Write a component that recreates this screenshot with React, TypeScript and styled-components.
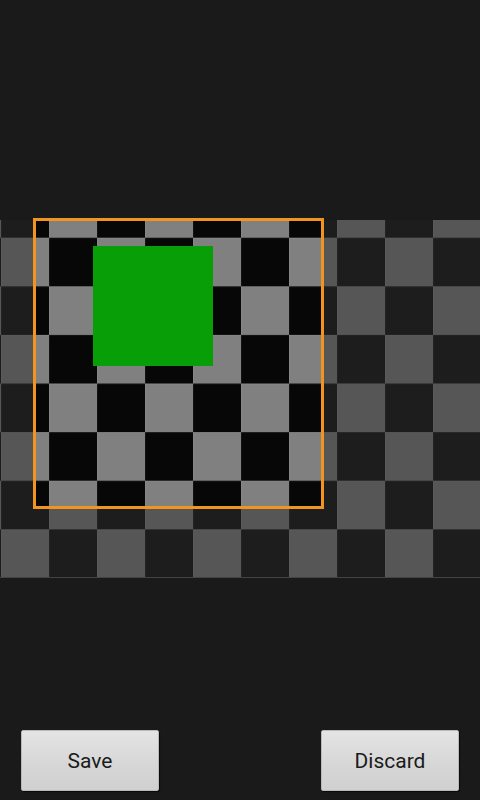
import React from 'react';
import styled, { createGlobalStyle } from 'styled-components';

const GlobalStyle = createGlobalStyle`
  html, body {
    margin: 0;
    padding: 0;
    background: #1a1a1a;
  }
  #root {
    height: 100vh;
  }
`;

const Screen = styled.div`
  display: flex;
  flex-direction: column;
  height: 100%;
  background: #1a1a1a;
  font-family: Roboto, "Noto Sans", sans-serif;
`;

const Stage = styled.div`
  flex: 1;
  padding-top: 220px;
`;

const Editor = styled.div`
  position: relative;
  width: 480px;
  height: 358px;
`;

const Picture = styled.div`
  position: relative;
  width: 100%;
  height: 100%;
  overflow: hidden;

  svg {
    display: block;
  }
`;

// undimmed region: everything around it gets the dim shadow
const CropWindow = styled.div<{ $x: number; $y: number; $size: number }>`
  position: absolute;
  left: ${(p) => p.$x}px;
  top: ${(p) => p.$y}px;
  width: ${(p) => p.$size}px;
  height: ${(p) => p.$size}px;
  box-shadow: 0 0 0 1000px rgba(49, 49, 49, 0.53);
`;

const CropFrame = styled.div<{ $x: number; $y: number; $size: number }>`
  position: absolute;
  left: ${(p) => p.$x}px;
  top: ${(p) => p.$y}px;
  width: ${(p) => p.$size}px;
  height: ${(p) => p.$size}px;
  box-sizing: border-box;
  border: 3px solid #f39320;
  pointer-events: none;
`;

const ButtonBar = styled.div`
  display: flex;
  justify-content: space-between;
  padding: 0 21px 9px;
`;

const Button = styled.button`
  width: 138px;
  height: 61px;
  border: 1px solid #b9b9b9;
  border-radius: 2px;
  background: linear-gradient(#e4e4e4, #d6d6d6 60%, #d0d0d0);
  box-shadow: 1px 1px 1px rgba(0, 0, 0, 0.6);
  font-family: Roboto, "Noto Sans", sans-serif;
  font-size: 21px;
  color: #1b1b1b;
  padding: 0;
  cursor: pointer;
`;

const CELL_W = 48;
const CELL_H = 48.6;

const CheckerImage = () => (
  <svg width="480" height="358" viewBox="0 0 480 358">
    <defs>
      <pattern
        id="checks"
        patternUnits="userSpaceOnUse"
        x="1"
        y={17.7 - CELL_H}
        width={CELL_W * 2}
        height={CELL_H * 2}
      >
        <rect width={CELL_W * 2} height={CELL_H * 2} fill="#070707" />
        <rect x={CELL_W} y="0" width={CELL_W} height={CELL_H} fill="#808080" />
        <rect x="0" y={CELL_H} width={CELL_W} height={CELL_H} fill="#808080" />
        <rect x="0" y="0" width={CELL_W * 2} height="1" fill="rgba(255,255,255,0.05)" />
        <rect x="0" y={CELL_H} width={CELL_W * 2} height="1" fill="rgba(255,255,255,0.05)" />
        <rect x="0" y="0" width="1" height={CELL_H * 2} fill="rgba(255,255,255,0.05)" />
        <rect x={CELL_W} y="0" width="1" height={CELL_H * 2} fill="rgba(255,255,255,0.05)" />
      </pattern>
    </defs>
    <rect width="480" height="358" fill="url(#checks)" />
    <rect x="0" y="357" width="480" height="1" fill="#5a5a5a" />
    <rect x="93" y="26" width="120" height="120" fill="#089e08" />
  </svg>
);

export default function App() {
  return (
    <>
      <GlobalStyle />
      <Screen>
        <Stage>
          <Editor>
            <Picture>
              <CheckerImage />
              <CropWindow $x={36} $y={1} $size={285} />
            </Picture>
            <CropFrame $x={33} $y={-2} $size={291} />
          </Editor>
        </Stage>
        <ButtonBar>
          <Button>Save</Button>
          <Button>Discard</Button>
        </ButtonBar>
      </Screen>
    </>
  );
}
